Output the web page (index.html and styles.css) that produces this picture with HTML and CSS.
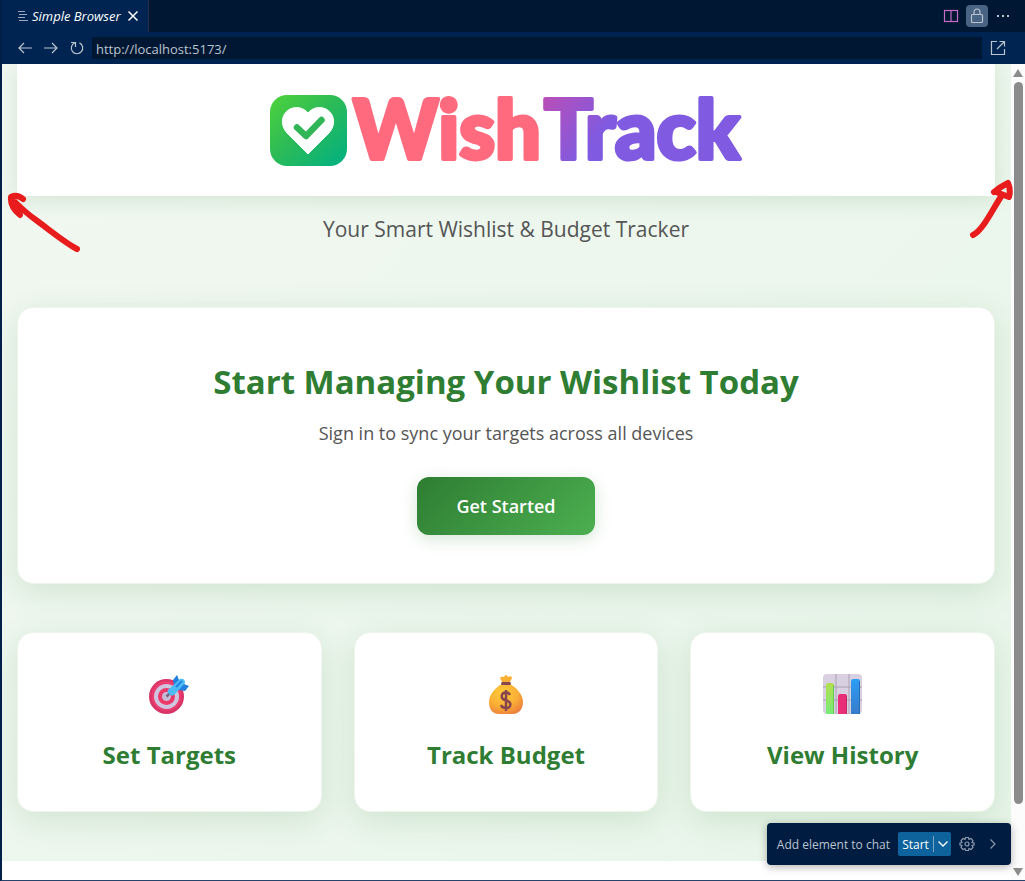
FILE: index.html
```html
<!DOCTYPE html>
<html lang="en">
<head>
<meta charset="utf-8">
<meta name="viewport" content="width=device-width, initial-scale=1">
<title>Simple Browser</title>
<link rel="stylesheet" href="styles.css">
</head>
<body>
<div class="window">
  <header class="tabbar">
    <div class="tab">
      <svg class="tab-icon" viewBox="0 0 10 10" width="10" height="10"><path d="M0 .5h7M1 3.5h8M0 6.5h7M1 9.5h9" /></svg>
      <span class="tab-title">Simple Browser</span>
      <button class="icon-btn tab-close" aria-label="Close tab"><svg viewBox="0 0 10 10" width="10" height="10"><path d="M.5.5l9 9M9.5.5l-9 9"/></svg></button>
    </div>
    <div class="tab-actions">
      <button class="icon-btn split" aria-label="Split editor"><svg viewBox="0 0 14 14" width="14" height="14"><rect x=".5" y="1.5" width="13" height="11"/><path d="M7 1.500v11"/></svg></button>
      <button class="icon-btn lock" aria-label="Unlock group"><svg viewBox="0 0 14 16" width="14" height="16"><rect x="1.500" y="6.500" width="11" height="8" rx="1"/><path d="M4 6.500V4a3 3 0 0 1 6 0v2.500"/></svg></button>
      <button class="icon-btn more" aria-label="More actions"><svg viewBox="0 0 14 4" width="14" height="4"><path d="M1 2h2M6 2h2M11 2h2"/></svg></button>
    </div>
  </header>
  <nav class="toolbar">
    <button class="icon-btn" aria-label="Back"><svg viewBox="0 0 14 12" width="14" height="12"><path d="M14 6H1M6 1L1 6l5 5"/></svg></button>
    <button class="icon-btn" aria-label="Forward"><svg viewBox="0 0 14 12" width="14" height="12"><path d="M0 6h13M8 1l5 5-5 5"/></svg></button>
    <button class="icon-btn" aria-label="Reload"><svg viewBox="0 0 14 14" width="14" height="14"><path d="M5 1.700A5.700 5.700 0 1 0 9.500 1.900M1 1.500h4.500V6"/></svg></button>
    <input class="url" type="text" value="http://localhost:5173/" aria-label="Address">
    <button class="icon-btn external" aria-label="Open in browser"><svg viewBox="0 0 16 16" width="16" height="16"><path d="M7 1.500H1.500v13h13V9M9.500 1.500h5v5M14.500 1.500L7 9"/></svg></button>
  </nav>

  <div class="viewport">
    <div class="page">
      <main class="landing">
        <header class="brand">
          <svg class="logo" role="img" aria-label="WishTrack" viewBox="0 0 480 84" width="480" height="84">
            <defs>
              <linearGradient id="tile" x1="0" y1="0" x2="1" y2="1"><stop offset="0" stop-color="#4fd33c"/><stop offset=".45" stop-color="#2dbb56"/><stop offset="1" stop-color="#00b083"/></linearGradient>
              <linearGradient id="violet" gradientUnits="userSpaceOnUse" x1="278" y1="10" x2="330" y2="50"><stop offset="0" stop-color="#b84fb8"/><stop offset="1" stop-color="#805ae0"/></linearGradient>
            </defs>
            <rect x="4" y="7" width="77" height="71" rx="17" fill="url(#tile)"/>
            <path d="M42 66L21 45C14 37 15 26 24 21C31 18 38 20 42 25C46 20 53 18 60 21C69 26 70 37 63 45Z" fill="#fff" stroke="#fff" stroke-width="1" stroke-linejoin="round"/>
            <path d="M31 39.500l9 8.500L55.500 32" fill="none" stroke="#30b557" stroke-width="6.500" stroke-linecap="round" stroke-linejoin="round"/>
            <text class="wordmark wish" x="87" y="71">Wish</text>
            <text class="wordmark track" x="278" y="71">Track</text>
          </svg>
        </header>
        <p class="tagline">Your Smart Wishlist &amp; Budget Tracker</p>
        <section class="card hero">
          <h1>Start Managing Your Wishlist Today</h1>
          <p>Sign in to sync your targets across all devices</p>
          <button class="cta">Get Started</button>
        </section>
        <section class="features">
          <article class="card feature">
            <svg viewBox="0 0 40 40" width="40" height="40">
              <circle cx="17.500" cy="22.500" r="17.500" fill="#d93468"/><circle cx="17.500" cy="22" r="15" fill="#ea3d70"/><circle cx="17.500" cy="22.500" r="12.500" fill="#cfc5df"/><circle cx="17.500" cy="22.500" r="8.500" fill="#ec3969"/><circle cx="17.500" cy="22.500" r="4.500" fill="#cabbd5"/>
              <path d="M17.500 22.500l5-5" stroke="#756487" stroke-width="2.500"/>
              <path d="M25 11L24 6l4-5 2 5 1 5zM30 10l5 0 5 2-4 5-6-1z" fill="#2380df"/>
              <path d="M20 15L31 5q5-1 5 4L26 20q-3 3-6 0t0-5z" fill="#4bbcf4"/><path d="M27 13l6-6" stroke="#2581e4" stroke-width="2"/>
            </svg>
            <h2>Set Targets</h2>
          </article>
          <article class="card feature">
            <svg viewBox="0 0 40 40" width="40" height="40">
              <defs><radialGradient id="bag" cx=".4" cy=".3" r=".75"><stop offset="0" stop-color="#ffcb38"/><stop offset=".6" stop-color="#f9ae36"/><stop offset="1" stop-color="#ed813c"/></radialGradient></defs>
              <path d="M16 8L14 4Q15 2 18 3Q20-1 22 3Q26 1 26 4L24 8z" fill="#f9af32"/>
              <path d="M16 10h8c7 4 13 11 13 18 0 8-5 12-10 12H13C7 40 3 36 3 28 3 20 10 13 16 10z" fill="url(#bag)"/>
              <rect x="15" y="8" width="10" height="3" rx="1.500" fill="#87464d"/>
              <path d="M24 21Q23 18.500 20 18.500C15 18.500 14 24.500 19 26C27 28 25 34 20 34Q16 34 15 31M20 16v21" fill="none" stroke="#87464d" stroke-width="2.500"/>
            </svg>
            <h2>Track Budget</h2>
          </article>
          <article class="card feature">
            <svg viewBox="0 0 40 40" width="40" height="40">
              <defs><linearGradient id="green-bar" x2="0" y2="1"><stop stop-color="#b4df50"/><stop offset="1" stop-color="#75ec76"/></linearGradient><linearGradient id="blue-bar" x2="0" y2="1"><stop stop-color="#2c9df4"/><stop offset="1" stop-color="#377bcb"/></linearGradient></defs>
              <rect width="39" height="40" rx="4" fill="#d9d1e1"/><path d="M13 0v40M26 0v40M0 13h39M0 26h39" stroke="#aaa2b3"/>
              <path d="M3 40V11q0-2 2-2h4q2 0 2 2v29z" fill="url(#green-bar)"/><path d="M15 40V22q0-2 2-2h5q2 0 2 2v18z" fill="#e92f78"/><path d="M28 40V7q0-2 2-2h5q2 0 2 2v33z" fill="url(#blue-bar)"/>
              <path d="M10.500 11v29" stroke="#64c951"/><path d="M23.500 22v18" stroke="#bd2864"/><path d="M36.500 7v33" stroke="#286eb2"/>
            </svg>
            <h2>View History</h2>
          </article>
        </section>
      </main>
    </div>
    <div class="scrollbar" aria-hidden="true"><i class="arrow up"></i><i class="thumb"></i><i class="arrow down"></i></div>
    <svg class="mark mark-left" viewBox="0 0 76 66" width="76" height="66"><path d="M19 10Q13 5 7 8Q6 18 16 26L11 13Q22 24 32 31C47 42 60 53 73 60"/></svg>
    <svg class="mark mark-right" viewBox="0 0 46 62" width="46" height="62"><path d="M6 56C16 51 24 33 35 16M27 13Q33 8 41 4Q44 11 42 18L29 13"/></svg>
    <div class="chatbar">
      <span>Add element to chat</span>
      <div class="split-button"><button class="start">Start</button><button class="start-menu" aria-label="Start options"><svg viewBox="0 0 10 6" width="10" height="6"><path d="M.5.5L5 5 9.500.5"/></svg></button></div>
      <button class="icon-btn gear" aria-label="Settings"><svg viewBox="0 0 16 16" width="16" height="16"><path d="M6.500 1.500h3l.5 2 2-1 2 2-1 2 2 .5v2l-2 .5 1 2-2 2-2-1-.5 2h-3l-.5-2-2 1-2-2 1-2-2-.5V7l2-.5-1-2 2-2 2 1z"/><circle cx="8" cy="8" r="2"/></svg></button>
      <button class="icon-btn next" aria-label="Collapse"><svg viewBox="0 0 6 10" width="6" height="10"><path d="M.5.5L5 5 .5 9.500"/></svg></button>
    </div>
  </div>
</div>
</body>
</html>
```
FILE: styles.css
```css
* { box-sizing: border-box; }
body { margin: 0; font-family: "Open Sans", "Noto Sans", sans-serif; }
h1, h2, p { margin: 0; }
button, input { font: inherit; border: 0; padding: 0; }
svg { display: block; flex: none; }

.window { min-height: 100vh; display: flex; flex-direction: column; border-left: 2px solid #00204a; border-bottom: 1px solid #27436b; background: #002451; }
.tabbar { display: flex; justify-content: space-between; height: 32px; background: #001733; }
.tab { display: flex; align-items: center; gap: 4px; width: 147px; padding: 0 7px 0 16px; background: #002451; border-right: 1px solid #2b2b4a; color: #fff; font-size: 13px; }
.tab-title { flex: 1; font-style: italic; white-space: nowrap; }
.tab-icon { stroke: #9ba8bd; }
.icon-btn { display: grid; place-items: center; width: 22px; height: 22px; background: none; color: #bbc3cf; border-radius: 4px; }
.icon-btn svg { fill: none; stroke: currentColor; stroke-width: 1.2; overflow: visible; }
.tab-close { width: 16px; color: #fff; }
.tab-close svg { stroke-width: 1.500; }
.tab-actions { display: flex; align-items: center; gap: 4px; padding-right: 11px; }
.split { color: #c66bc1; }
.lock { background: #486383; }
.more svg { stroke-width: 2; }

.toolbar { display: flex; align-items: center; gap: 4px; height: 32px; padding: 0 16px 0 12px; background: #002451; }
.url { flex: 1; min-width: 0; height: 22px; padding: 1px 4px 0; background: #001733; color: #bbc3cf; font-size: 13px; }
.external { margin-left: 1px; }

.viewport { position: relative; flex: 1; display: flex; background: #fff; overflow: hidden; }
.page { flex: 1; min-width: 0; padding-bottom: 19px; }
.landing { padding: 0 16px 49px 15px; background: linear-gradient(135deg, #f1f8f1, #e8f5e9); text-align: center; }
.brand { display: flex; justify-content: center; padding: 24px 0; background: #fff; box-shadow: 0 4px 20px rgba(46, 125, 50, .15); }
.logo { max-width: 100%; overflow: visible; }
.wordmark { font-family: Lato, sans-serif; font-weight: 900; font-size: 81px; stroke-width: 4; stroke-linejoin: round; }
.wish { fill: #ff6a7f; stroke: #ff6a7f; }
.track { fill: url(#violet); stroke: url(#violet); }
.tagline { padding: 17px 0 61px; color: #555; font-size: 21px; line-height: 33px; }
.card { background: #fff; border: 1px solid #edf5ed; border-radius: 16px; box-shadow: 0 8px 32px rgba(46, 125, 50, .15); }
.hero { padding: 48px 24px; }
.hero h1 { color: #2e7d32; font-size: 33px; line-height: 52px; font-weight: 700; }
.hero p { margin: 11px 0 30px; color: #555; font-size: 18px; line-height: 28px; }
.cta { min-width: 178px; height: 58px; padding: 0 32px; border-radius: 12px; color: #fff; font-size: 18px; font-weight: 600; background: linear-gradient(135deg, #2e7d32, #4caf50); box-shadow: 0 4px 16px rgba(46, 125, 50, .2); }
.features { display: grid; grid-template-columns: repeat(3, minmax(0, 1fr)); gap: 32px; margin-top: 48px; }
.feature { display: flex; flex-direction: column; align-items: center; gap: 21px; padding: 41px 16px 36px; }
.feature h2 { color: #2e7d32; font-size: 24px; line-height: 40px; font-weight: 700; }

.scrollbar { display: flex; flex-direction: column; align-items: center; gap: 5px; width: 14px; padding: 5px 0 4px; background: #fcfcfc; }
.thumb { width: 9px; height: 722px; margin-bottom: auto; border-radius: 5px; background: #8b8b8b; }
.arrow { border: 5px solid transparent; }
.up { border-top: 0; border-bottom: 8px solid #8b8b8b; }
.down { border-bottom: 0; border-top: 8px solid #8b8b8b; }

.mark { position: absolute; fill: none; stroke: #e81c1c; stroke-width: 6; stroke-linecap: round; stroke-linejoin: round; }
.mark-left { left: 2px; top: 125px; }
.mark-right { right: 12px; top: 115px; }

.chatbar { position: absolute; right: 14px; bottom: 15px; display: flex; align-items: center; height: 42px; padding: 0 7px 0 10px; border-radius: 4px; background: #001c40; color: #bbc3cf; font-size: 12px; box-shadow: 0 2px 8px rgba(0, 0, 0, .3); white-space: nowrap; }
.split-button { display: flex; height: 24px; margin: 0 5px 0 8px; border-radius: 2px; background: #0e639c; overflow: hidden; }
.split-button button { background: none; color: #fff; }
.start { width: 35px; }
.start-menu { display: grid; place-items: center; width: 18px; height: 16px; margin-top: 4px; }
.split-button .start-menu { border-left: 1px solid #7ba4c4; }
.start-menu svg { fill: none; stroke: #fff; stroke-width: 1.300; }
.gear { color: #8d9bb0; }
.next { color: #8d9bb0; margin-left: 4px; }
```
